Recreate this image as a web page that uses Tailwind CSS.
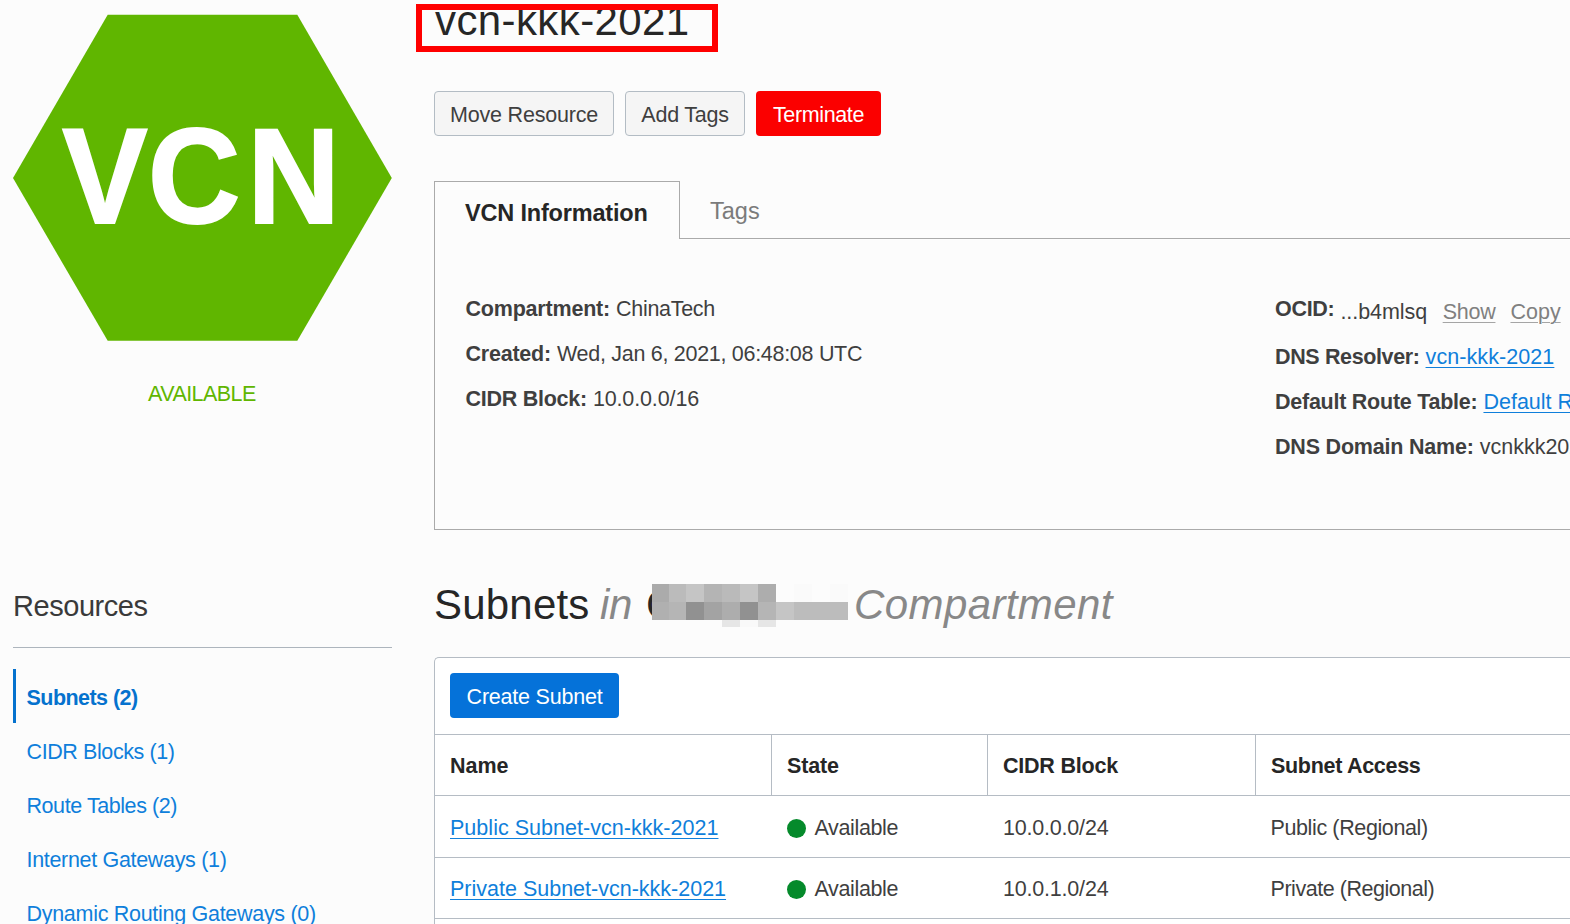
<!DOCTYPE html>
<html lang="en">
<head>
<meta charset="utf-8">
<title>vcn-kkk-2021</title>
<script src="https://cdn.jsdelivr.net/npm/@tailwindcss/browser@4"></script>
</head>
<body class="relative flex h-[924px] w-[1570px] overflow-hidden bg-[#fcfcfc] font-['Liberation_Sans',Arial,sans-serif] text-[21.5px] leading-[24px] text-[#3f3f3f]">

  <!-- Sidebar -->
  <aside class="flex w-[379px] shrink-0 flex-col ml-[13px] pt-[14px]">
    <svg class="block h-[328px] w-[379px] shrink-0" viewBox="13 14 379 328">
      <polygon points="13,178 107.7,14.8 297.3,14.8 391.8,178 297.3,340.8 107.7,340.8" fill="#60b600"/>
      <text transform="scale(.94 1)" x="66.2 157.4 263.4" y="223.2" font-size="136" font-weight="700" fill="#fff" stroke="#fff" stroke-width="2">VCN</text>
    </svg>
    <div class="mt-[40px] shrink-0 pl-[135px] tracking-[-0.55px] text-[#60b600]">AVAILABLE</div>
    <h2 class="mt-[182px] h-[60px] shrink-0 border-b border-[#adb5bd] text-[29px] leading-[36px] tracking-[-0.45px] text-[#3a3a3a]">Resources</h2>
    <nav class="mt-[21px] flex shrink-0 flex-col whitespace-nowrap text-[#0f7fdb]">
      <a class="h-[54px] border-l-[3px] border-[#0572ce] pl-[10.5px] pt-[17px] font-bold tracking-[-0.54px] text-[#0572ce]">Subnets (2)</a>
      <a class="h-[54px] pl-[13.5px] pt-[17px] tracking-[-0.4px]">CIDR Blocks (1)</a>
      <a class="h-[54px] pl-[13.5px] pt-[17px] tracking-[-0.43px]">Route Tables (2)</a>
      <a class="h-[54px] pl-[13.5px] pt-[17px] tracking-[-0.32px]">Internet Gateways (1)</a>
      <a class="h-[54px] pl-[13.5px] pt-[17px] tracking-[-0.29px]">Dynamic Routing Gateways (0)</a>
    </nav>
  </aside>

  <!-- Main column -->
  <main class="ml-[42px] flex w-[1136px] shrink-0 flex-col whitespace-nowrap">
    <h1 class="h-[48px] shrink-0 pl-[1px] text-[42px] leading-[42px] tracking-[0.4px] text-[#262626]">vcn-kkk-2021</h1>

    <div class="mt-[43px] flex h-[45px] shrink-0 gap-[11px]">
      <button class="w-[180px] rounded-[4px] border border-[#b3bcc4] bg-[#f5f5f5] pt-[2px] tracking-[-0.19px]">Move Resource</button>
      <button class="w-[120px] rounded-[4px] border border-[#b3bcc4] bg-[#f5f5f5] pt-[2px] tracking-[-0.24px]">Add Tags</button>
      <button class="w-[125px] rounded-[4px] bg-[#fb0000] pt-[2px] tracking-[-0.37px] text-white">Terminate</button>
    </div>

    <!-- Tabs -->
    <div class="mt-[45px] flex h-[58px] shrink-0 text-[23.5px]">
      <div class="w-[246px] border-x border-t border-[#aaaaaa] pl-[30px] pt-[19px] font-bold tracking-[-0.18px] text-[#262626]">VCN Information</div>
      <div class="flex-1 border-b border-[#aaaaaa] pl-[30px] pt-[18px] text-[#7b7b7b]">Tags</div>
    </div>
    <section class="flex h-[291px] shrink-0 border-b border-l border-[#aaaaaa] pl-[30.5px] pt-[48px] leading-[45px]">
      <div class="w-[809px] shrink-0">
        <div><b class="mr-[6px] tracking-[-0.2px]">Compartment:</b><span class="tracking-[-0.3px]">ChinaTech</span></div>
        <div><b class="mr-[6px] tracking-[-0.22px]">Created:</b><span class="tracking-[-0.29px]">Wed, Jan 6, 2021, 06:48:08 UTC</span></div>
        <div><b class="mr-[6px] tracking-[-0.26px]">CIDR Block:</b><span class="tracking-[-0.13px]">10.0.0.0/16</span></div>
      </div>
      <div class="pl-[0.5px]">
        <div class="flex h-[48px]"><b class="tracking-[-0.31px]">OCID:</b><span class="ml-[6px] mt-[3px] tracking-[-0.05px]">...b4mlsq</span><a class="ml-[15.5px] mt-[3px] tracking-[-0.25px] text-[#808080] underline decoration-[#a5a5a5] decoration-1 underline-offset-[3px]">Show</a><a class="ml-[15px] mt-[3px] text-[#808080] underline decoration-[#a5a5a5] decoration-1 underline-offset-[3px]">Copy</a></div>
        <div><b class="mr-[6px] tracking-[-0.37px]">DNS Resolver:</b><a class="tracking-[0.08px] text-[#0f7fdb] underline decoration-1 underline-offset-[3px]">vcn-kkk-2021</a></div>
        <div><b class="mr-[6px] tracking-[-0.25px]">Default Route Table:</b><a class="text-[#0f7fdb] underline decoration-1 underline-offset-[3px]">Default R</a></div>
        <div><b class="mr-[6px] tracking-[-0.2px]">DNS Domain Name:</b><span>vcnkkk202</span></div>
      </div>
    </section>

    <!-- Section title with a redacted compartment name -->
    <h2 class="mt-[48px] flex h-[52px] shrink-0 text-[42px] leading-[53px] text-[#262626]">
      <span class="w-[166px] shrink-0 tracking-[0.2px]">Subnets</span>
      <i class="w-[46px] shrink-0 tracking-[-0.33px] text-[#888]">in</i>
      <span class="w-[6px] shrink-0">C</span>
      <svg class="relative mt-[5px] h-[44px] w-[197px] shrink-0" viewBox="0 0 197 44" shape-rendering="crispEdges">
        <path fill="#ababab" d="M0 1h17v18H0z"/><path fill="#bbb" d="M17 1h17v18H17z"/><path fill="#c5c5c5" d="M34 1h18v18H34z"/><path fill="#b4b4b4" d="M52 1h18v18H52z"/><path fill="#bababa" d="M70 1h18v18H70z"/><path fill="#c5c5c5" d="M88 1h18v18H88z"/><path fill="#adadad" d="M106 1h18v18h-18z"/><path fill="#fafafa" d="M142 1h18v18h-18zM178 1h18v18h-18z"/>
        <path fill="#b0b0b0" d="M0 19h17v18H0z"/><path fill="#b5b5b5" d="M17 19h17v18H17z"/><path fill="#919191" d="M34 19h18v18H34z"/><path fill="#a3a3a3" d="M52 19h18v18H52z"/><path fill="#adadad" d="M70 19h18v18H70z"/><path fill="#919191" d="M88 19h18v18H88z"/><path fill="#b5b5b5" d="M106 19h18v18h-18z"/><path fill="#c5c5c5" d="M124 19h18v18h-18z"/><path fill="#bcbcbc" d="M142 19h54v18h-54z"/>
        <path fill="#e6e6e6" d="M70 37h18v7H70zM106 37h18v7h-18z"/><path fill="#f9f9f9" d="M88 37h18v7H88z"/>
      </svg>
      <i class="ml-[5px] tracking-[0.4px] text-[#888]">Compartment</i>
    </h2>

    <!-- Subnet table -->
    <section class="mt-[27px] flex h-[280px] shrink-0 flex-col rounded-tl-[5px] border-l border-t border-[#b5bcc4] bg-white">
      <div class="flex h-[76px] shrink-0 pl-[15px] pt-[15px]">
        <button class="h-[45px] w-[169px] rounded-[4px] bg-[#0572d9] pt-[2px] tracking-[-0.22px] text-white">Create Subnet</button>
      </div>
      <div class="grid h-[62px] shrink-0 grid-cols-[337px_216px_268px_1fr] border-y border-[#b5bcc4] font-bold leading-[62px] text-[#262626]">
        <div class="h-[60px] border-r border-[#b5bcc4] pl-[15px]">Name</div>
        <div class="h-[60px] border-r border-[#b5bcc4] pl-[15px] tracking-[-0.15px]">State</div>
        <div class="h-[60px] border-r border-[#b5bcc4] pl-[15px] tracking-[-0.22px]">CIDR Block</div>
        <div class="h-[60px] pl-[15px] tracking-[-0.3px]">Subnet Access</div>
      </div>
      <div class="grid h-[62px] shrink-0 grid-cols-[337px_216px_268px_1fr] border-b border-[#b5bcc4] leading-[64px]">
        <div class="pl-[15px]"><a class="tracking-[0.03px] text-[#0f7fdb] underline decoration-1 underline-offset-[3px]">Public Subnet-vcn-kkk-2021</a></div>
        <div class="flex items-center gap-[8.5px] pl-[15px] tracking-[-0.36px]"><span class="size-[19px] rounded-full bg-[#058a2b]"></span>Available</div>
        <div class="pl-[15px] tracking-[-0.2px]">10.0.0.0/24</div>
        <div class="pl-[14.5px] tracking-[-0.38px]">Public (Regional)</div>
      </div>
      <div class="grid h-[61px] shrink-0 grid-cols-[337px_216px_268px_1fr] border-b border-[#b5bcc4] leading-[62px]">
        <div class="pl-[15px]"><a class="text-[#0f7fdb] underline decoration-1 underline-offset-[3px]">Private Subnet-vcn-kkk-2021</a></div>
        <div class="flex items-center gap-[8.5px] pl-[15px] tracking-[-0.36px]"><span class="size-[19px] rounded-full bg-[#058a2b]"></span>Available</div>
        <div class="pl-[15px] tracking-[-0.2px]">10.0.1.0/24</div>
        <div class="pl-[14.5px] tracking-[-0.46px]">Private (Regional)</div>
      </div>
    </section>
  </main>

  <!-- Annotation frame over the title -->
  <div class="absolute left-[416px] top-[4px] h-[48px] w-[302px] border-[6px] border-[#ff0000]"></div>
</body>
</html>
